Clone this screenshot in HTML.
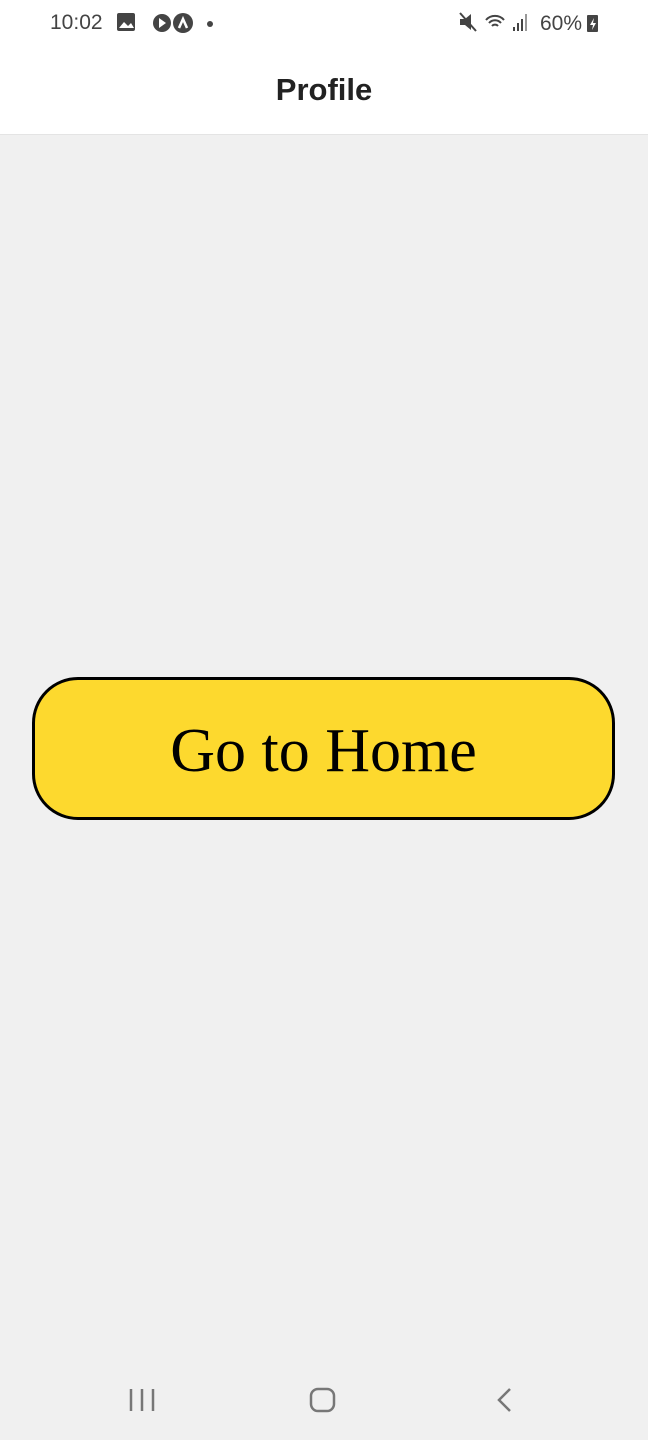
<!DOCTYPE html>
<html><head><meta charset="utf-8"><style>
body{margin:0;width:648px;height:1440px;background:#f0f0f0;font-family:"Liberation Sans",sans-serif;position:relative;overflow:hidden}
.top{position:absolute;left:0;top:0;width:648px;height:134px;background:#fff;border-bottom:1px solid #e4e4e4}
.time{position:absolute;left:50px;top:11px;font-size:21px;color:#444}
.title{position:absolute;left:0;width:648px;top:72px;text-align:center;font-size:31px;font-weight:bold;color:#222}
.btn{position:absolute;left:32px;top:677px;width:577px;height:137px;background:#fdd92e;border:3px solid #000;border-radius:46px;display:flex;align-items:center;justify-content:center;font-family:"Liberation Serif",serif;font-size:62px;color:#000}
.btn span{position:relative;top:3px}
.nav{position:absolute;top:1386px}
</style></head><body>
<div class="top">
<div class="time">10:02</div>
<svg style="position:absolute;left:116px;top:12px" width="105" height="22">
<rect x="1" y="1" width="18" height="18" rx="2" fill="#444"/><path d="M3 16l5-6 4 4 3-3 3 5z" fill="#fff"/>
<circle cx="46" cy="11" r="9" fill="#444"/><path d="M43 6l7 5-7 5z" fill="#fff"/>
<circle cx="67" cy="11" r="10" fill="#444"/><path d="M63 16l4-9 4 9" stroke="#fff" stroke-width="2.5" fill="none"/>
<circle cx="94" cy="12" r="3" fill="#444"/>
</svg>
<svg style="position:absolute;left:458px;top:11px" width="145" height="24">
<path d="M2 8h5l6-5v16l-6-5H2z" fill="#444"/><path d="M2 2l16 18" stroke="#444" stroke-width="2"/>
<path d="M28 9a12 12 0 0 1 18 0M31 12a8 8 0 0 1 12 0M34 15a4 4 0 0 1 6 0" stroke="#444" stroke-width="2" fill="none"/>
<rect x="55" y="16" width="2" height="4" fill="#444"/><rect x="59" y="12" width="2" height="8" fill="#444"/><rect x="63" y="8" width="2" height="12" fill="#444"/><rect x="67" y="3" width="2" height="17" fill="#999"/>
<text x="82" y="19" font-size="21" fill="#444" font-family="Liberation Sans">60%</text>
<rect x="129" y="4" width="11" height="17" rx="1" fill="#444"/><path d="M136 7l-4 7h3l-1 5 4-7h-3z" fill="#fff"/>
</svg>
<div class="title">Profile</div>
</div>
<div class="btn"><span>Go to Home</span></div>
<svg class="nav" style="left:125px" width="35" height="30"><path d="M6 3v22M17 3v22M28 3v22" stroke="#777" stroke-width="2.5"/></svg>
<svg class="nav" style="left:305px" width="35" height="30"><rect x="6" y="3" width="23" height="22" rx="7" fill="none" stroke="#777" stroke-width="2.5"/></svg>
<svg class="nav" style="left:490px" width="30" height="30"><path d="M20 3L9 14l11 11" fill="none" stroke="#777" stroke-width="2.5"/></svg>
</body></html>
